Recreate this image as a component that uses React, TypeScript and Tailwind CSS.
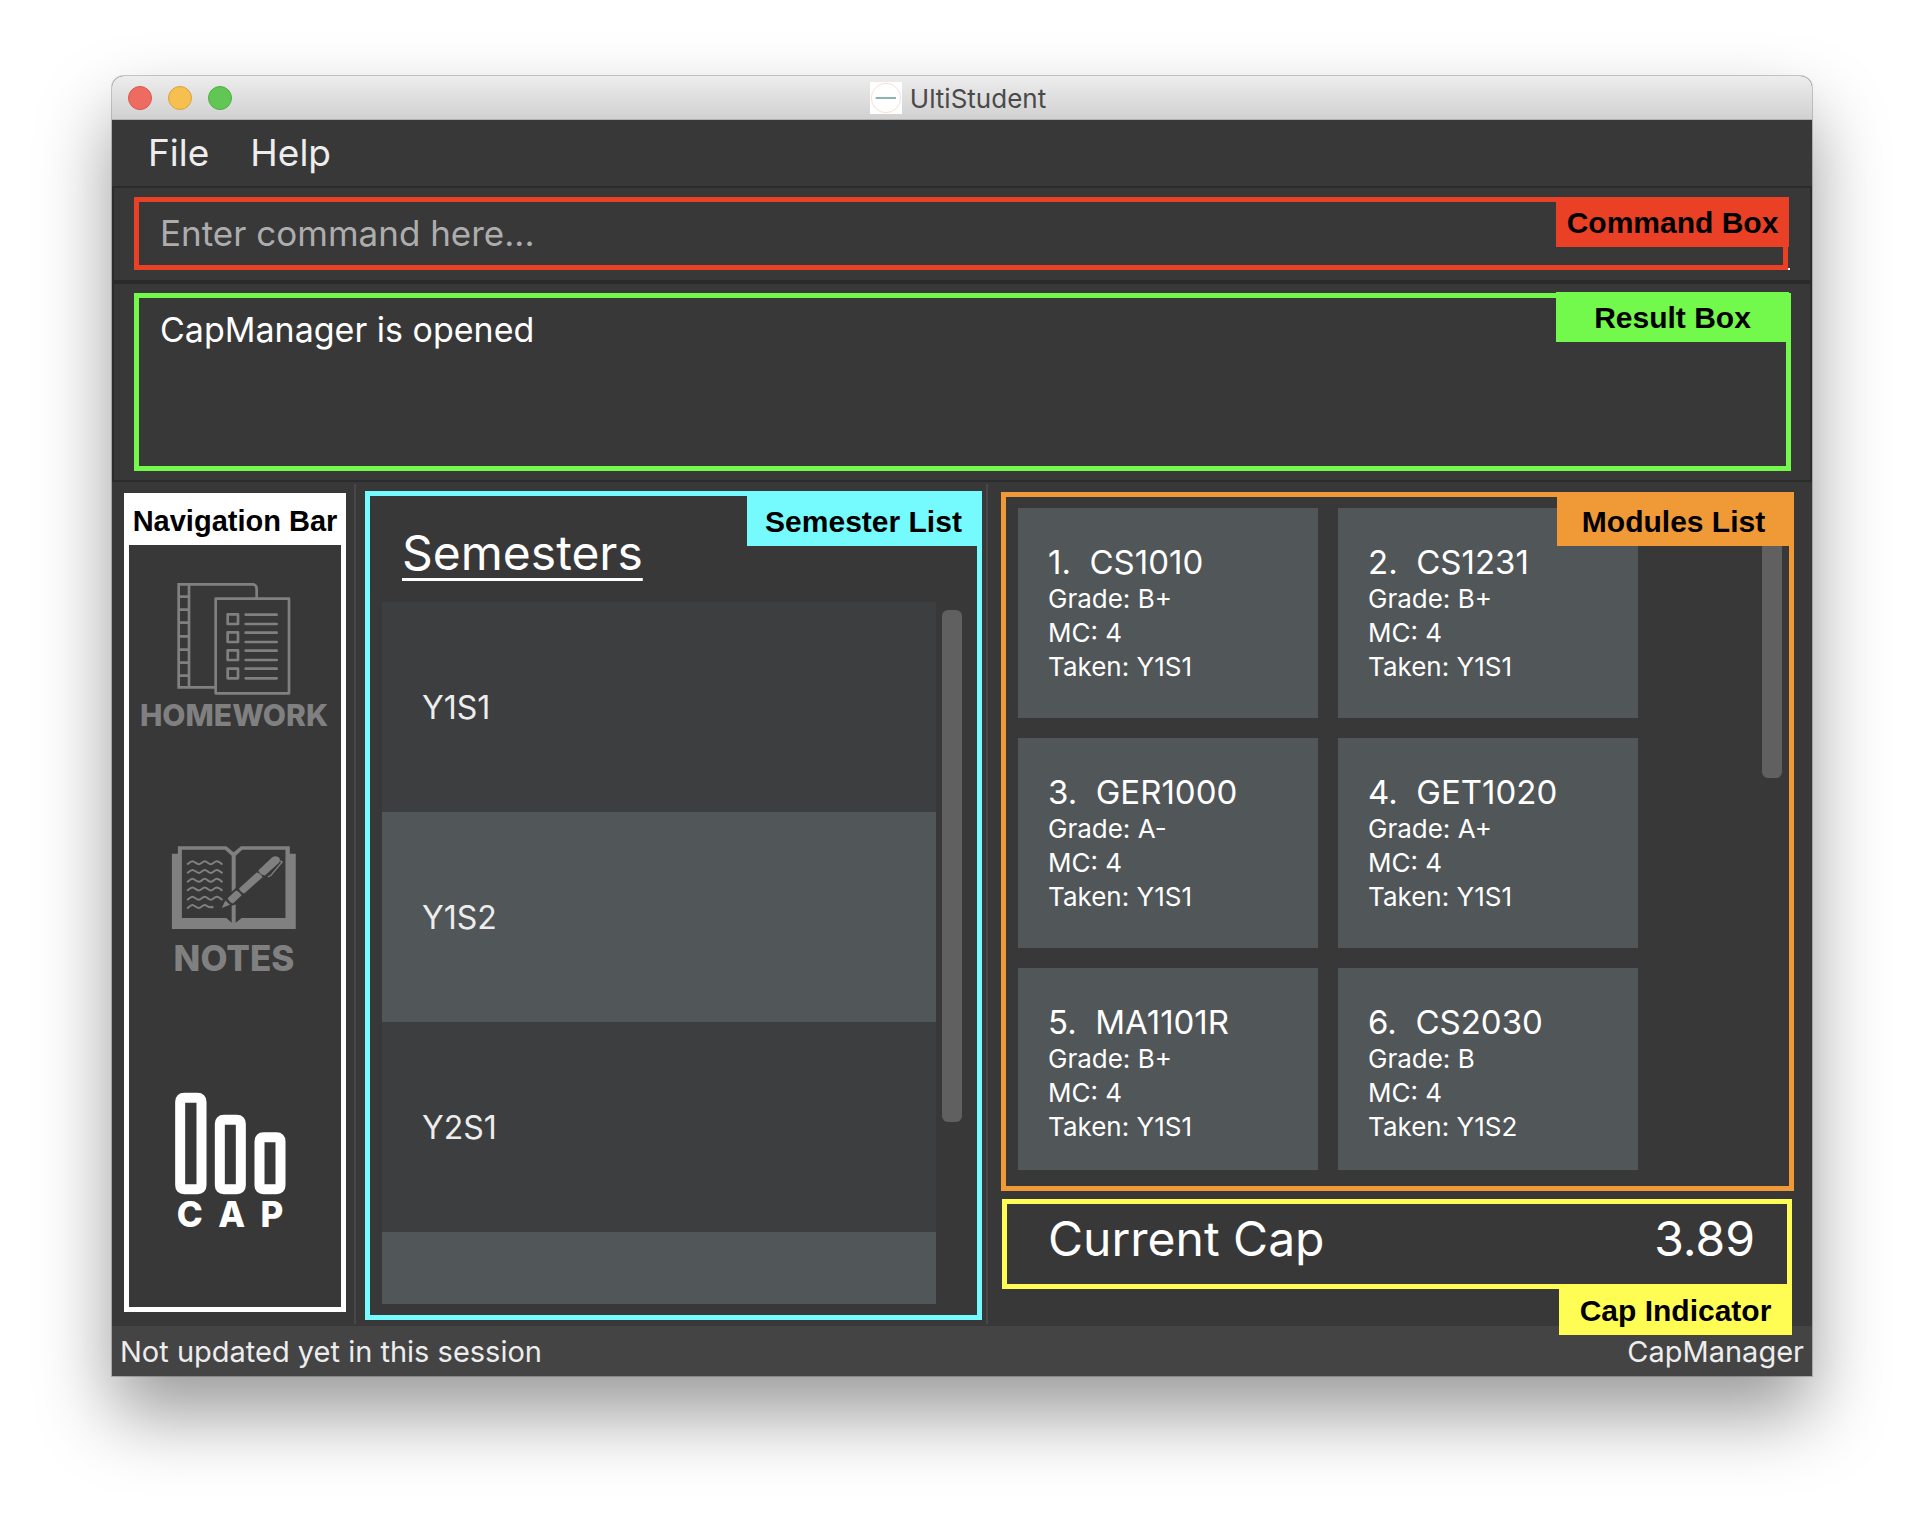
import React from "react";

type Module = { code: string; grade: string; mc: number; taken: string };

const modules: Module[] = [
  { code: "CS1010", grade: "B+", mc: 4, taken: "Y1S1" },
  { code: "CS1231", grade: "B+", mc: 4, taken: "Y1S1" },
  { code: "GER1000", grade: "A-", mc: 4, taken: "Y1S1" },
  { code: "GET1020", grade: "A+", mc: 4, taken: "Y1S1" },
  { code: "MA1101R", grade: "B+", mc: 4, taken: "Y1S1" },
  { code: "CS2030", grade: "B", mc: 4, taken: "Y1S2" },
];

const semesters = ["Y1S1", "Y1S2", "Y2S1", ""];

function Tag({ className, children }: { className: string; children: React.ReactNode }) {
  return (
    <span
      className={`flex items-center justify-center whitespace-nowrap font-['Liberation_Sans',sans-serif] leading-[34px] font-bold text-black ${className}`}
    >
      {children}
    </span>
  );
}

function HomeworkIcon() {
  return (
    <svg viewBox="200 306 342 342" className="h-[114px] w-[114px]" fill="none" stroke="currentColor" strokeWidth="8" aria-hidden="true">
      <path d="M316 622H205V313H428Q439 314 439 328V354" />
      <path d="M236 313V622" />
      <path d="M205 350H236M205 389H236M205 428H236M205 469H236M205 509H236M205 548H236M205 587H236" />
      <rect x="316" y="356" width="220" height="284" strokeLinejoin="round" />
      <g strokeLinejoin="round">
        <rect x="352" y="403" width="31" height="29" />
        <rect x="352" y="457" width="31" height="29" />
        <rect x="352" y="511" width="31" height="29" />
        <rect x="352" y="566" width="31" height="29" />
      </g>
      <path
        strokeLinecap="round"
        d="M406 404H499M406 432H499M406 458H499M406 486H499M406 512H499M406 540H499M406 566H499M406 595H499"
      />
    </svg>
  );
}

function NotesIcon() {
  const waves = [248, 274, 301, 327, 355];
  return (
    <svg viewBox="184 194 378 256" className="h-[85px] w-[126px]" aria-hidden="true">
      <path
        fill="currentColor"
        fillRule="evenodd"
        d="M186 220H204V198H350L372 216L394 198H541V220H559V447H186ZM216 208V414H350L366 428V226L346 208ZM378 226V428L396 414H528V208H398Z"
      />
      <g fill="none" stroke="currentColor" strokeWidth="6">
        {waves.map((y) => (
          <path
            key={y}
            d={`M232 ${y + 5}C238 ${y} 242 ${y - 5} 248 ${y - 5}S260 ${y + 4} 267 ${y + 4}S278 ${y - 5} 285 ${y - 5}S296 ${y + 4} 303 ${y + 4}S314 ${y - 5} 321 ${y - 5}S333 ${y} 338 ${y + 5}`}
          />
        ))}
        <path d="M232 385C238 380 242 375 248 375S260 384 267 384S278 375 285 375S296 386 311 380" />
      </g>
      <path d="M334 386L350 350L384 318L440 266L496 222L520 232L516 252L476 300L376 374Z" fill="#383838" />
      <g fill="currentColor">
        <path d="M336 384L347 361L361 374Z" />
        <path d="M354 354L378 332Q384 330 396 345L370 370Q358 366 354 354Z" />
        <path d="M388 325L441 277Q452 278 459 291L404 340Q392 336 388 325Z" />
        <path d="M446 271L488 231Q500 224 510 233Q514 242 506 250L466 286Q452 284 446 271Z" />
      </g>
      <path d="M512 242L518 245L484 286L475 290" fill="none" stroke="currentColor" strokeWidth="4" />
    </svg>
  );
}

function CapIcon() {
  return (
    <svg viewBox="194 94 338 312" className="h-[104px] w-[113px]" fill="none" stroke="currentColor" strokeWidth="30" aria-hidden="true">
      <path d="M212 126Q212 114 224 114H264Q276 114 276 126V377Q276 389 264 389H224Q212 389 212 377Z" />
      <path d="M331 192Q331 180 343 180H382Q394 180 394 192V377Q394 389 382 389H343Q331 389 331 377Z" />
      <path d="M450 245Q450 233 462 233H501Q513 233 513 245V377Q513 389 501 389H462Q450 389 450 377Z" />
    </svg>
  );
}

function AppLogo() {
  return (
    <svg viewBox="0 0 96 96" className="h-8 w-8" aria-hidden="true">
      <rect width="96" height="96" fill="#fff" />
      <circle cx="48" cy="48" r="44" fill="none" stroke="#f8dfd5" strokeWidth="3" />
      <path d="M17 48H78" stroke="#74a5a2" strokeWidth="5" />
    </svg>
  );
}

function Divider() {
  return <div className="my-0.5 bg-[#474747]" />;
}

export default function App() {
  return (
    <div className="min-h-screen overflow-hidden bg-white px-28 pt-[76px] pb-[148px] font-['Inter',sans-serif] text-white">
      <div className="rounded-t-xl bg-[#383838] shadow-[0_0_0_1px_rgba(0,0,0,0.2),0_38px_74px_rgba(0,0,0,0.4)]">
        <header className="relative flex h-11 items-center justify-center rounded-t-xl border-b border-[#b0b0b0] bg-linear-to-b from-[#ededed] to-[#d1d1d1] pr-2">
          <div className="absolute left-4 flex gap-4">
            <button aria-label="Close" className="h-6 w-6 rounded-full border border-[#d9574e] bg-[#ed6b60]" />
            <button aria-label="Minimise" className="h-6 w-6 rounded-full border border-[#dba23c] bg-[#f5c04f]" />
            <button aria-label="Zoom" className="h-6 w-6 rounded-full border border-[#4fae40] bg-[#62c655]" />
          </div>
          <h1 className="flex items-center gap-2 text-[26px] leading-8 text-[#4a4a4a]">
            <AppLogo />
            <span className="pt-0.5">UltiStudent</span>
          </h1>
        </header>

        <nav className="flex h-[66px] items-center gap-[41px] px-9 text-[37px] leading-10 text-[#ededed]">
          <button>File</button>
          <button>Help</button>
        </nav>

        <section className="border-2 border-[#2b2b2b] pt-[9px] pr-[22px] pb-[10px] pl-5">
          <div className="relative border-5 border-[#ea4025]">
            <input
              type="text"
              aria-label="Command Box"
              placeholder="Enter command here..."
              className="block h-[63px] w-full bg-transparent px-[21px] pb-0.5 text-[35px] leading-10 outline-none placeholder:text-[#adadad]"
            />
            <Tag className="absolute -top-[5px] -right-[6px] h-[50px] w-[233px] bg-[#ea4025] pt-0.5 text-[30px]">Command Box</Tag>
            <span className="absolute -right-[7px] -bottom-[5px] h-0.5 w-0.5 bg-white" />
          </div>
        </section>

        <section className="border-2 border-[#2b2b2b] pt-[9px] pr-[19px] pb-[9px] pl-5">
          <div className="relative border-5 border-[#73f84c]">
            <textarea
              readOnly
              aria-label="Result Box"
              value="CapManager is opened"
              className="block h-[168px] w-full resize-none bg-transparent px-[21px] py-3 text-[34px] leading-10 outline-none"
            />
            <Tag className="absolute -top-[6px] -right-[3px] h-[50px] w-[233px] bg-[#73f84c] pt-0.5 text-[30px]">Result Box</Tag>
          </div>
        </section>

        <main className="grid grid-cols-[242px_2px_minmax(0,630fr)_2px_minmax(0,824fr)]">
          <aside className="mt-[11px] mr-2 mb-[14px] ml-3 border-5 border-t-0 border-white">
            <Tag className="h-[52px] bg-white pt-1 text-[29px]">Navigation Bar</Tag>
            <div className="flex flex-col items-center gap-[116px] pt-[37px] pr-0.5 font-extrabold text-[#808080]">
              <button className="flex flex-col items-center gap-[5px] text-[30px] leading-7">
                <HomeworkIcon />
                HOMEWORK
              </button>
              <button className="flex flex-col items-center gap-[11px] text-[35px] leading-[34px]">
                <NotesIcon />
                NOTES
              </button>
              <button className="flex flex-col items-center gap-0.5 pr-2 text-[35px] leading-[34px] whitespace-pre text-white">
                <CapIcon />
                {"C  A  P"}
              </button>
            </div>
          </aside>

          <Divider />

          <section className="relative mt-[9px] mr-1 mb-1.5 ml-[9px] border-5 border-[#75fbfd] pt-[29px] pr-[15px] pb-[11px] pl-3">
            <Tag className="absolute -top-[5px] -right-[5px] h-[55px] w-[235px] bg-[#75fbfd] pt-1.5 pr-0.5 text-[30px]">Semester List</Tag>
            <h2 className="ml-5 text-[48px] leading-[56px] underline decoration-[3px] underline-offset-[8px]">Semesters</h2>
            <div className="mt-[21px] flex gap-1.5">
              <ul className="h-[702px] min-w-0 flex-1 overflow-hidden text-[32px] text-[#ededed]">
                {semesters.map((s, i) => (
                  <li key={i} className="flex h-[210px] items-center px-10 pt-0.5 odd:bg-[#3c3e3f] even:bg-[#515658]">
                    {s}
                  </li>
                ))}
              </ul>
              <div className="mt-2 h-[512px] w-5 shrink-0 rounded-md bg-[#606060]" />
            </div>
          </section>

          <Divider />

          <div className="mr-[18px] ml-[13px]">
            <section className="relative mt-2.5 flex border-5 border-[#f09937] pt-[11px] pr-[7px] pb-4 pl-3">
              <div className="flex h-[662px] min-w-0 flex-1 flex-wrap content-start gap-5 overflow-hidden">
                {modules.map((m, i) => (
                  <article key={m.code} className="h-[210px] w-[300px] bg-[#515658] px-[30px] pt-9 text-[26px] leading-[34px]">
                    <h3 className="pb-0.5 text-[33px] leading-9 whitespace-pre">{`${i + 1}.  ${m.code}`}</h3>
                    <p>Grade: {m.grade}</p>
                    <p>MC: {m.mc}</p>
                    <p>Taken: {m.taken}</p>
                  </article>
                ))}
              </div>
              <div className="mt-2 h-[262px] w-5 shrink-0 rounded-md bg-[#606060]" />
              <Tag className="absolute -top-[5px] -right-[5px] h-[54px] w-[237px] bg-[#f09937] pt-1.5 pr-1 text-[30px]">Modules List</Tag>
            </section>

            <section className="relative mt-2 mr-0.5 ml-px flex justify-between border-5 border-[#fffd54] pt-[7px] pr-8 pb-[17px] pl-[41px] text-[48px] leading-[56px]">
              <span>Current Cap</span>
              <span>3.89</span>
              <Tag className="absolute top-full -right-[5px] h-[51px] w-[233px] bg-[#fffd54] pt-0.5 text-[30px]">Cap Indicator</Tag>
            </section>
          </div>
        </main>

        <footer className="flex h-[50px] items-center justify-between bg-[#444] px-2 pt-0.5 text-[29px] leading-8 text-[#ededed]">
          <span>Not updated yet in this session</span>
          <span>CapManager</span>
        </footer>
      </div>
    </div>
  );
}
